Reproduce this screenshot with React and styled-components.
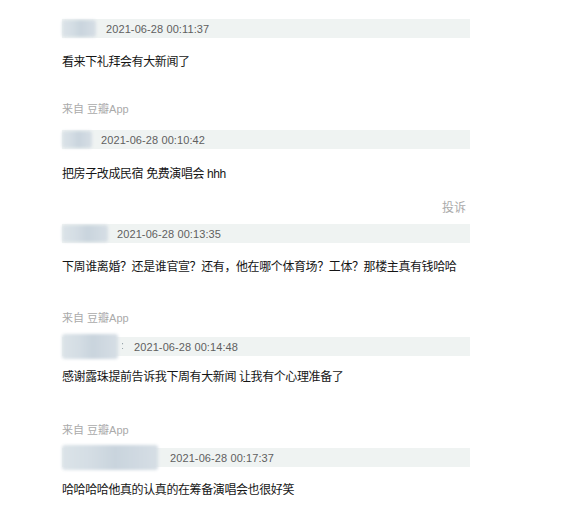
import styled, { createGlobalStyle } from "styled-components"

const Global = createGlobalStyle`
    body{
        margin:0;
        background:#fff;
        font-family:"Liberation Sans","Noto Sans CJK SC",Arial,sans-serif;
    }
`

const Page = styled.div`
    width:408px;
    padding:19px 0 0 62px;
`

const Item = styled.div`
    display:flex;
    flex-direction:column;
    margin-bottom:${p => p.after || 0}px;
`

const Bar = styled.div`
    display:flex;
    align-items:center;
    height:19px;
    background:#eff3f2;
`

const Name = styled.span`
    position:relative;
    width:${p => p.w}px;
    height:19px;
    flex-shrink:0;
    & i{
        position:absolute;
        left:0;
        top:${p => p.tall ? -3 : 1}px;
        bottom:${p => p.tall ? -3 : 1}px;
        width:${p => p.blur}px;
        background:linear-gradient(90deg,#dbe3e8 0,#d4dde4 30%,#c9d4dd 55%,#d6dee5 100%);
        filter:blur(1.5px);
        border-radius:3px;
    }
    & b{
        position:absolute;
        right:0;
        top:2px;
        font-weight:normal;
        font-size:11px;
        color:#9aa6ad;
        filter:blur(0.4px);
    }
`

const Time = styled.span`
    margin-left:10px;
    font-size:11px;
    color:#5f5f5f;
    letter-spacing:0.1px;
`

const Body = styled.div`
    margin-top:${p => p.gap}px;
    font-size:12px;
    line-height:16px;
    letter-spacing:-0.4px;
    color:#151515;
`

const Foot = styled.div`
    margin-top:${p => p.gap}px;
    font-size:11px;
    line-height:14px;
    color:#aaa;
    text-align:${p => p.right ? "right" : "left"};
    padding-right:${p => p.right ? 4 : 0}px;
`

const Report = styled.span`
    font-size:12px;
`

const comments = [
    { w: 34, blur: 34, time: "2021-06-28 00:11:37", text: "看来下礼拜会有大新闻了", bodyGap: 16, foot: "app", footGap: 32, after: 14 },
    { w: 29, blur: 30, time: "2021-06-28 00:10:42", text: "把房子改成民宿 免费演唱会 hhh", bodyGap: 17, foot: "report", footGap: 19, after: 9 },
    { w: 45, blur: 46, time: "2021-06-28 00:13:35", text: "下周谁离婚？还是谁官宣？还有，他在哪个体育场？工体？那楼主真有钱哈哈", bodyGap: 16, foot: "app", footGap: 36, after: 12 },
    { w: 62, blur: 56, tall: true, colon: true, time: "2021-06-28 00:14:48", text: "感谢露珠提前告诉我下周有大新闻 让我有个心理准备了", bodyGap: 13, foot: "app", footGap: 38, after: 11 },
    { w: 98, blur: 96, tall: true, time: "2021-06-28 00:17:37", text: "哈哈哈哈他真的认真的在筹备演唱会也很好笑", bodyGap: 15 },
]

const App = () => {
    return (
        <>
            <Global />
            <Page>
                {comments.map((c, i) => (
                    <Item key={i} after={c.after}>
                        <Bar>
                            <Name w={c.w} blur={c.blur} tall={c.tall}>
                                <i />
                                {c.colon && <b>:</b>}
                            </Name>
                            <Time>{c.time}</Time>
                        </Bar>
                        <Body gap={c.bodyGap}>{c.text}</Body>
                        {c.foot === "app" && <Foot gap={c.footGap}>来自 豆瓣App</Foot>}
                        {c.foot === "report" && <Foot gap={c.footGap} right><Report>投诉</Report></Foot>}
                    </Item>
                ))}
            </Page>
        </>
    )
}

export default App
